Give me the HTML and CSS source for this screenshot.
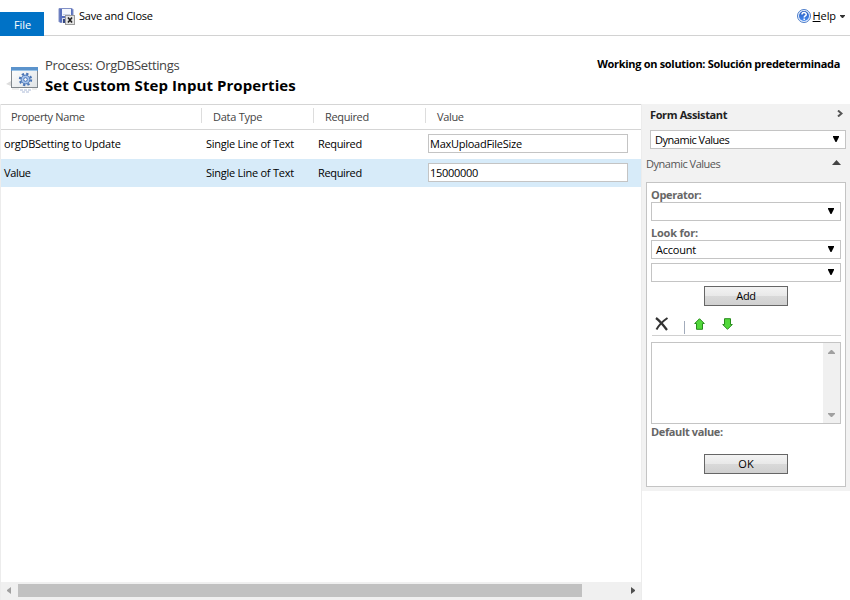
FILE: index.html
```
<!DOCTYPE html>
<html lang="en">
<head>
<meta charset="utf-8">
<title>Set Custom Step Input Properties</title>
<link rel="stylesheet" href="styles.css">
</head>
<body>
<header class="ribbon">
  <div class="file-tab"><span class="t-file">File</span></div>
  <div class="save">
    <svg width="17" height="17" viewBox="0 0 17 17">
      <path d="M1 .5h13l1 1v13H2l-1-1z" fill="#5870bd" stroke="#8290c6"/>
      <rect x="4" y="1" width="9" height="7" fill="#f4f7fc"/><path d="M5 6.500h7" stroke="#c7d0e4"/>
      <rect x="4" y="10" width="7" height="5" fill="#d9deea"/><rect x="5" y="11" width="2" height="4" fill="#364783"/>
      <rect x="7.500" y="7.500" width="9" height="9" fill="#e4e4e4" stroke="#9b9b9b"/>
      <path d="M10 9.500l4 5M14 9.500l-4 5" stroke="#222" stroke-width="1.600"/>
    </svg>
    <span class="t-save">Save and Close</span>
  </div>
  <div class="help">
    <svg width="14" height="14" viewBox="0 0 14 14">
      <defs><linearGradient id="hg" x2="0" y2="1"><stop stop-color="#2459bd"/><stop offset="1" stop-color="#4a8df2"/></linearGradient></defs>
      <circle cx="7" cy="7" r="6.500" fill="#e9f1fd" stroke="#4c7cc9"/><circle cx="7" cy="7" r="5" fill="url(#hg)"/>
      <path d="M5 5.500C5 3 9.200 3 9.200 5.400 9.200 7 7.200 6.900 7.200 8.500M7.200 9.600v1.400" fill="none" stroke="#fff" stroke-width="1.500"/>
    </svg>
    <span class="t-help"><u>H</u>elp</span>
    <svg class="caret" width="5" height="3" viewBox="0 0 5 3"><path d="M0 0h5v.7L3 3H2L0 .7z" fill="#333"/></svg>
  </div>
</header>
<section class="heading">
  <svg class="process-icon" width="32" height="30" viewBox="0 0 32 30">
    <defs><linearGradient id="wg" x2="1" y2="1"><stop stop-color="#fff"/><stop offset="1" stop-color="#dfe3e6"/></linearGradient></defs>
    <path d="M0 20l5-3v5z" fill="#ddd"/>
    <rect x="5.500" y="3.500" width="26" height="20" fill="url(#wg)" stroke="#81888e"/>
    <rect x="5" y="3" width="27" height="4" fill="#5b93cc"/><path d="M6 6.500h25" stroke="#9bc4e8"/>
    <g fill="none" stroke="#4874b6"><circle cx="19.500" cy="15.500" r="5.700" stroke-width="2" stroke-dasharray="2.300 2.177"/><circle cx="19.500" cy="15.500" r="4.400" fill="#a8c5ed"/><circle cx="19.500" cy="15.500" r="1.800" fill="#fff"/></g>
    <path d="M14 26h11M16 28h7" stroke="#a9b8d5" stroke-dasharray="3 1"/><path d="M6 25h7m13 0h5" stroke="#ddd"/>
  </svg>
  <div class="titles">
    <div class="process"><span class="t-process">Process: OrgDBSettings</span></div>
    <h1><span class="t-title">Set Custom Step Input Properties</span></h1>
  </div>
  <div class="solution"><span class="t-solution">Working on solution: Solución predeterminada</span></div>
</section>
<main>
  <section class="grid">
    <div class="row head">
      <div><span class="t-pn">Property Name</span></div><div><span class="t-dt">Data Type</span></div><div><span class="t-rq">Required</span></div><div><span class="t-val">Value</span></div>
    </div>
    <div class="row">
      <div><span class="t-org">orgDBSetting to Update</span></div><div><span class="t-line">Single Line of Text</span></div><div><span class="t-rq">Required</span></div><div class="field"><span class="t-max">MaxUploadFileSize</span></div>
    </div>
    <div class="row selected">
      <div><span class="t-val">Value</span></div><div><span class="t-line">Single Line of Text</span></div><div><span class="t-rq">Required</span></div><div class="field"><span class="t-num">15000000</span></div>
    </div>
    <div class="hscroll">
      <svg width="4" height="7" viewBox="0 0 4 7"><path d="M4 0v7L0 4V3z" fill="#a0a0a0"/></svg>
      <div class="thumb"></div>
      <svg class="right" width="4" height="7" viewBox="0 0 4 7"><path d="M0 0v7l4-3V3z" fill="#505050"/></svg>
    </div>
  </section>
  <aside>
    <div class="assistant">
      <div class="fa-head"><span class="t-fa">Form Assistant</span>
        <svg width="6" height="7" viewBox="0 0 6 7"><path d="M1 .5l3.500 3L1 6.500" fill="none" stroke="#555" stroke-width="2"/></svg></div>
      <div class="select top"><span class="t-dv">Dynamic Values</span><svg width="6" height="6" viewBox="0 0 6 6"><path d="M0 0h6v1L3.500 6h-1L0 1z"/></svg></div>
      <div class="section-title"><span class="t-dv">Dynamic Values</span><svg width="9" height="5" viewBox="0 0 9 5"><path d="M0 5h9L4.500 0z" fill="#444"/></svg></div>
      <div class="panel">
        <div class="label"><span class="t-op">Operator:</span></div>
        <div class="select"><svg width="6" height="6" viewBox="0 0 6 6"><path d="M0 0h6v1L3.500 6h-1L0 1z"/></svg></div>
        <div class="label"><span class="t-look">Look for:</span></div>
        <div class="select"><span class="t-acc">Account</span><svg width="6" height="6" viewBox="0 0 6 6"><path d="M0 0h6v1L3.500 6h-1L0 1z"/></svg></div>
        <div class="select second"><svg width="6" height="6" viewBox="0 0 6 6"><path d="M0 0h6v1L3.500 6h-1L0 1z"/></svg></div>
        <div class="button"><span class="t-add">Add</span></div>
        <div class="tools">
          <svg class="x" width="14" height="14" viewBox="0 0 14 14"><path d="M1 1c4 3 8 8 11 12" fill="none" stroke="#333" stroke-width="2.200"/><path d="M12.500 1C8 4 4 8 1.500 12.500" fill="none" stroke="#333" stroke-width="2"/></svg>
          <i></i>
          <svg class="up" width="11" height="12" viewBox="0 0 11 12"><path d="M5.500.700l4.800 4.800H8.500v5.800h-6V5.500H.700z" fill="#52d83b" stroke="#278c1c"/></svg>
          <svg class="down" width="11" height="12" viewBox="0 0 11 12"><path d="M5.500 11.300l4.800-4.800H8.500V.700h-6v5.800H.700z" fill="#52d83b" stroke="#278c1c"/></svg>
        </div>
        <div class="list"><div class="vscroll">
          <svg width="7" height="4" viewBox="0 0 7 4"><path d="M0 4h7V3L4 0H3L0 3z" fill="#a0a0a0"/></svg>
          <svg width="7" height="4" viewBox="0 0 7 4"><path d="M0 0h7v1L4 4H3L0 1z" fill="#a0a0a0"/></svg>
        </div></div>
        <div class="label default"><span class="t-def">Default value:</span></div>
        <div class="button"><span class="t-ok">OK</span></div>
      </div>
    </div>
  </aside>
</main>
</body>
</html>
```
FILE: styles.css
```
* { box-sizing: border-box; }
body { margin: 0; width: 850px; height: 600px; overflow: hidden; background: #fff; color: #000; font: 11px/16px "Open Sans", "Noto Sans", sans-serif; }
svg { display: block; flex: none; }
span { white-space: nowrap; }
.t-file { letter-spacing: -.1px; }
.t-save { letter-spacing: -.22px; }
.t-process { letter-spacing: -.36px; }
.t-title { letter-spacing: .07px; }
.t-solution { letter-spacing: -.3px; }
.t-pn, .t-rq { letter-spacing: -.35px; }
.t-dt, .t-line, .t-max { letter-spacing: -.26px; }
.t-org, .t-acc { letter-spacing: -.23px; }
.t-val { letter-spacing: -.35px; }
.t-num { letter-spacing: -.3px; }
.t-fa, .t-def { letter-spacing: -.37px; }
.t-dv { letter-spacing: -.48px; }
.t-op { letter-spacing: -.36px; }
.t-look { letter-spacing: -.2px; }
.t-add { letter-spacing: -.3px; }
.ribbon { height: 36px; border-bottom: 1px solid #d2d2d2; display: flex; }
.file-tab { width: 44px; height: 24px; margin-top: 12px; background: #0072c6; color: #fff; padding: 5px 0 0 14px; }
.save { display: flex; padding: 8px 0 0 14px; gap: 4px; }
.help { display: flex; margin-left: auto; padding: 9px 5px 0 0; }
.t-help { margin: -1px 4px 0 2px; letter-spacing: -.1px; }
.caret { margin-top: 6px; }
.heading { height: 68px; display: flex; }
.process-icon { margin: 28px 0 0 6px; }
.titles { margin-left: 7px; padding-top: 19px; }
.process { font-size: 13px; line-height: 20px; color: #444; }
h1 { margin: 0; font-size: 15px; line-height: 20px; }
.solution { margin-left: auto; padding: 20px 10px 0 0; font-weight: 700; }
main { display: flex; height: 496px; }
.grid { width: 642px; border: solid #ececec; border-width: 0 1px; display: flex; flex-direction: column; }
.row { display: grid; grid-template-columns: 202px 112px 112px 1fr; height: 28px; align-items: center; padding-left: 3px; }
.row.head { height: 26px; padding: 0; grid-template-columns: 200px 112px 112px 1fr; border: solid #d5d5d5; border-width: 1px 0; color: #444; align-items: start; padding-top: 3px; }
.head > div { height: 15px; padding-left: 10px; line-height: 17px; }
.head > div + div { border-left: 1px solid #ddd; padding-left: 11px; }
.row.selected { background: #d7ebf9; margin-top: 1px; }
.row .field { width: 200px; height: 19px; border: 1px solid #c4c4c4; background: #fff; line-height: 17px; padding-left: 1px; margin: -1px 0 0 -2px; }
.hscroll { margin-top: auto; height: 18px; display: flex; align-items: center; background: #f0f0f0; padding: 0 6px; }
.hscroll svg { margin-top: -1px; }
.thumb { width: 564px; height: 13px; background: #c1c1c1; margin: -1px 0 0 7px; }
.hscroll .right { margin-left: auto; }
aside { width: 208px; }
.assistant { background: #f2f2f2; height: 387px; padding: 0 4px; }
.fa-head { height: 26px; display: flex; justify-content: space-between; padding: 3px 3px 0 4px; font-weight: 700; color: #222; }
.fa-head svg { margin-top: 3px; }
.select { height: 19px; border: 1px solid #c4c4c4; background: #fff; display: flex; line-height: 18px; padding: 0 6px 0 4px; }
.select svg { margin: 5px 0 0 auto; }
.select.top { margin-left: 4px; }
.section-title { height: 33px; display: flex; justify-content: space-between; color: #555; padding: 7px 5px 0 0; }
.section-title svg { margin-top: 4px; }
.panel { height: 305px; border: 1px solid #c4c4c4; background: #fff; padding: 0 4px; }
.label { color: #666; font-weight: 700; height: 19px; padding-top: 4px; }
.select.second { margin-top: 4px; }
.button { width: 84px; height: 20px; margin: 4px auto 0 53px; border: 1px solid #666; background: linear-gradient(#f3f3f3, #e8e8e8 50%, #d9d9d9 51%, #d0d0d0); text-align: center; line-height: 18px; }
.tools { height: 30px; border-bottom: 1px solid #d0d0d0; margin-left: 1px; display: flex; }
.x { margin: 11px 0 0 3px; }
.tools i { width: 1px; height: 13px; background: #a2abbb; margin: 15px 0 0 15px; }
.up { margin: 12px 0 0 9px; }
.down { margin: 12px 0 0 17px; }
.list { height: 82px; margin-top: 6px; border: 1px solid #c4c4c4; display: flex; justify-content: flex-end; }
.vscroll { width: 17px; background: #f0f0f0; display: flex; flex-direction: column; justify-content: space-between; align-items: center; padding: 7px 0 6px; }
.label.default { height: 26px; padding-top: 0; }
```
